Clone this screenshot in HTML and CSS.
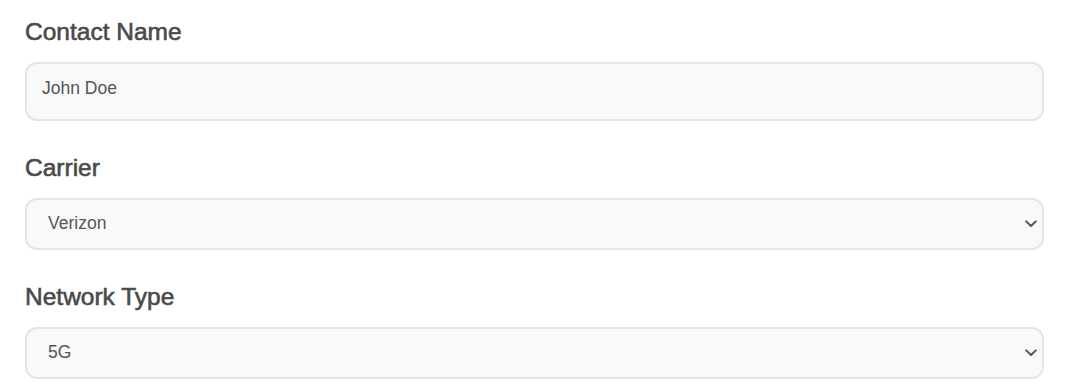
FILE: index.html
```html
<!DOCTYPE html>
<html lang="en">
<head>
<meta charset="utf-8">
<title>Contact form</title>
<link rel="stylesheet" href="styles.css">
</head>
<body>
<form class="form">
  <div class="group">
    <label class="label" for="name">Contact Name</label>
    <input class="field input" id="name" type="text" value="John Doe">
  </div>
  <div class="group">
    <label class="label" for="carrier">Carrier</label>
    <div class="select-wrap">
      <select class="field select" id="carrier">
        <option>Verizon</option>
        <option>AT&amp;T</option>
        <option>T-Mobile</option>
      </select>
      <svg class="chevron" width="12" height="8" viewBox="0 0 12 8" aria-hidden="true"><path d="M1.2 1.4 L6 6 L10.8 1.4" fill="none" stroke="#555" stroke-width="2" stroke-linecap="round" stroke-linejoin="round"/></svg>
    </div>
  </div>
  <div class="group">
    <label class="label" for="network">Network Type</label>
    <div class="select-wrap">
      <select class="field select" id="network">
        <option>5G</option>
        <option>4G LTE</option>
        <option>3G</option>
      </select>
      <svg class="chevron" width="12" height="8" viewBox="0 0 12 8" aria-hidden="true"><path d="M1.2 1.4 L6 6 L10.8 1.4" fill="none" stroke="#555" stroke-width="2" stroke-linecap="round" stroke-linejoin="round"/></svg>
    </div>
  </div>
</form>
</body>
</html>
```
FILE: styles.css
```css
html, body {
  margin: 0;
  padding: 0;
  background: #ffffff;
}

body {
  font-family: "Liberation Sans", Arial, sans-serif;
  color: #444444;
}

.form {
  padding: 18px 25px 0 25px;
}

.group {
  margin-bottom: 33px;
}

.group:last-child {
  margin-bottom: 0;
}

.label {
  display: block;
  font-size: 24.5px;
  font-weight: 400;
  line-height: 28px;
  color: #4a4a4a;
  margin-bottom: 16px;
  -webkit-text-stroke: 0.6px #4a4a4a;
}

.field {
  display: block;
  width: 100%;
  box-sizing: border-box;
  margin: 0;
  border: 2px solid #e5e5e5;
  border-radius: 12px;
  background: #f9f9f9;
  font-family: "Liberation Sans", Arial, sans-serif;
  font-size: 17.5px;
  color: #555555;
  outline: none;
}

.input {
  height: 59px;
  padding: 0 15px 6px 15px;
}

.select-wrap {
  position: relative;
}

.select {
  -webkit-appearance: none;
  appearance: none;
  height: 52px;
  padding: 0 40px 3px 21px;
}

.chevron {
  position: absolute;
  right: 7px;
  top: 50%;
  margin-top: -4px;
  pointer-events: none;
}
```
